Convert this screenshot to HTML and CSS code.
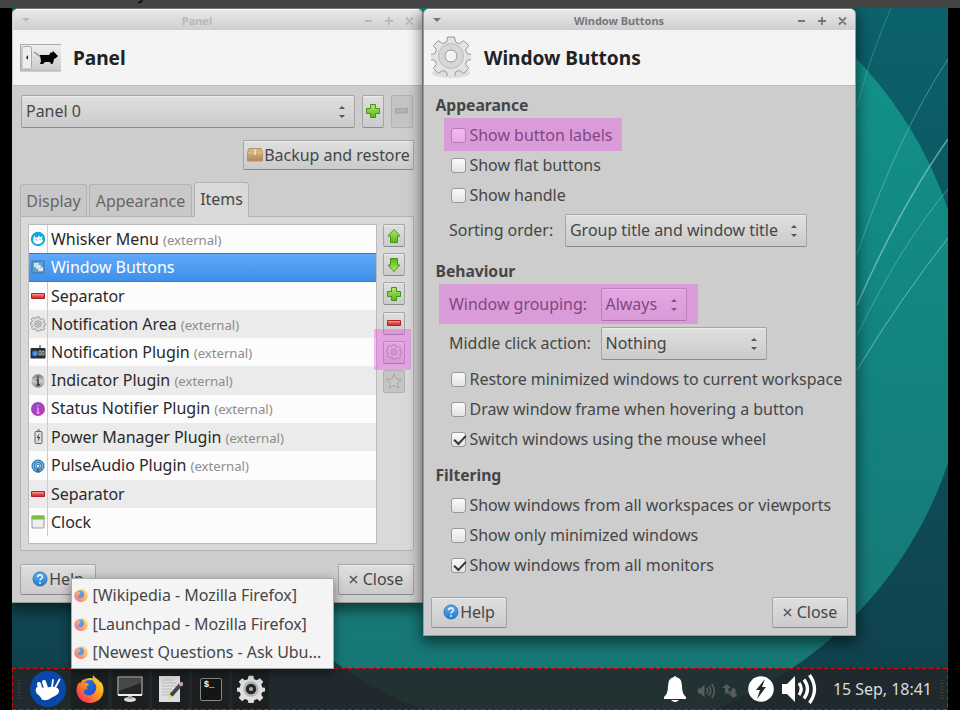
FILE: index.html
```
<!DOCTYPE html>
<html lang="en">
<head>
<meta charset="utf-8">
<title>Panel preferences</title>
<link rel="stylesheet" href="styles.css">
</head>
<body>
<svg width="0" height="0" class="defs">
  <defs>
    <linearGradient id="green" x1="0" y1="0" x2="0" y2="1"><stop offset="0" stop-color="#b4ea62"/><stop offset="1" stop-color="#58b51c"/></linearGradient>
    <linearGradient id="red" x1="0" y1="0" x2="0" y2="1"><stop offset="0" stop-color="#f08070"/><stop offset="1" stop-color="#d0202c"/></linearGradient>
    <linearGradient id="blue" x1="0" y1="0" x2="0" y2="1"><stop offset="0" stop-color="#5eb4f4"/><stop offset="1" stop-color="#2578cf"/></linearGradient>
    <linearGradient id="box" x1="0" y1="0" x2="0" y2="1"><stop offset="0" stop-color="#d9bd8c"/><stop offset="1" stop-color="#af8954"/></linearGradient>
    <linearGradient id="metal" x1="0" y1="0" x2="0" y2="1"><stop offset="0" stop-color="#f0f0f0"/><stop offset="1" stop-color="#c9c9c9"/></linearGradient>
    <linearGradient id="ball" x1="0" y1="0" x2="0" y2="1"><stop offset="0" stop-color="#777"/><stop offset=".5" stop-color="#ccc"/><stop offset="1" stop-color="#888"/></linearGradient>
    <linearGradient id="purple" x1="0" y1="0" x2="1" y2="1"><stop offset="0" stop-color="#7a4fd4"/><stop offset="1" stop-color="#d936a8"/></linearGradient>
    <linearGradient id="fire" x1="1" y1="0" x2="0" y2="1"><stop offset="0" stop-color="#fff04a"/><stop offset=".45" stop-color="#ff9a1c"/><stop offset="1" stop-color="#f5156c"/></linearGradient>
    <linearGradient id="sea" x1="0" y1="0" x2="1" y2="1"><stop offset="0" stop-color="#1e8cf0"/><stop offset=".45" stop-color="#1668d8"/><stop offset="1" stop-color="#4a35b8"/></linearGradient>
    <symbol id="plus" viewBox="0 0 16 16"><path d="M5.500 1.500h5v4h4v5h-4v4h-5v-4h-4v-5h4z" fill="url(#green)" stroke="#43941d"/></symbol>
    <symbol id="minus" viewBox="0 0 16 16"><path d="M1.500 5.500h13v5h-13z" fill="url(#red)" stroke="#b3222b"/><path d="M2.500 6.700h11" stroke="#fa9b90"/></symbol>
    <symbol id="up" viewBox="0 0 16 16"><path d="M8 1.500L14 8h-2.500v6.500h-7V8H2z" fill="url(#green)" stroke="#43941d"/></symbol>
    <symbol id="cog" viewBox="0 0 40 40"><path d="M16.500 1h7l1 5 4 1.600 4.200-3 4.900 4.900-3 4.200 1.600 4 4.800.8v5l-4.800.8-1.600 4 3 4.200-4.900 4.900-4.200-3-4 1.600-1 5h-7l-1-5-4-1.600-4.200 3-4.900-4.900 3-4.200-1.600-4-4.800-.8v-5l4.800-.8 1.600-4-3-4.200 4.900-4.900 4.200 3 4-1.600z"/></symbol>
    <symbol id="minicog" viewBox="0 0 16 16"><path d="M6.500 1h3l.5 1.800 1.200.5 1.700-.9 1.700 1.700-.9 1.700.5 1.200 1.300.5v2l-1.300.5-.5 1.200.9 1.700-1.700 1.700-1.700-.9-1.200.5L9.500 15h-3L6 13.200l-1.200-.5-1.700.9-1.700-1.700.9-1.700L1.800 9 .5 8.500v-2L1.800 6l.5-1.200-.9-1.700 1.700-1.700 1.700.9L6 1.800z" stroke-width="1"/><circle cx="8" cy="8" r="3.200" stroke-width=".9"/><circle cx="8" cy="8" r="1.400" stroke-width=".9"/></symbol>
    <symbol id="fox" viewBox="0 0 28 28"><circle cx="14" cy="15" r="12" fill="url(#fire)"/><circle cx="14" cy="13" r="8" fill="url(#sea)"/><path d="M17 0c2 3 5 4 7 7 2-1 4 6 3.500 9C27 23 21 28 14 28 6 28 .5 22 .5 15c0-3 1-6 3-8l.5 2 3-5 1 4c2-1 4 0 5 2l-2.500 1.500 1 2.500-3 .5-1 3c2 4 8 4 11 0 3-4 2-8-1-10C18 6 16 4 17 0z" fill="url(#fire)"/></symbol>
    <symbol id="help" viewBox="0 0 16 16"><circle cx="8" cy="8" r="7" fill="url(#blue)" stroke="#2b74b8"/><path d="M5.700 6.300C5.700 3.200 10.300 3.200 10.300 6 10.300 7.800 8 7.600 8 9.600" fill="none" stroke="#fff" stroke-width="1.400"/><circle cx="8" cy="12" r=".9" fill="#fff"/></symbol>
    <symbol id="sound" viewBox="0 0 36 32"><path d="M0 11h5l8-8v26l-8-8H0z" fill="currentColor"/><path d="M17 10q4.500 6 0 12M22 6.500q7 9.500 0 19M27.500 2q10 14 0 28" fill="none" stroke="currentColor" stroke-width="3.300"/></symbol>
  </defs>
</svg>

<div class="topbar"><span>y</span></div>

<main class="desktop">
  <svg class="wallpaper" viewBox="12 8 936 702" width="936" height="702">
    <defs>
      <linearGradient id="deep" x1="0" y1="0" x2="0" y2="1"><stop offset="0" stop-color="#0b626b"/><stop offset=".45" stop-color="#0d525e"/><stop offset="1" stop-color="#10404b"/></linearGradient>
      <linearGradient id="teal" x1="0" y1="0" x2="0" y2="1"><stop offset="0" stop-color="#12968d"/><stop offset=".5" stop-color="#128581"/><stop offset="1" stop-color="#197473"/></linearGradient>
    </defs>
    <rect x="12" y="8" width="936" height="702" fill="url(#deep)"/>
    <circle cx="568" cy="336.500" r="400.500" fill="url(#teal)"/>
    <g fill="none" stroke="#9edbd5">
      <path d="M857 107Q870 56 891 8" stroke-opacity=".28"/>
      <path d="M857 254Q898 135 948 59" stroke-opacity=".4"/>
      <path d="M857 305Q900 207 948 139" stroke-opacity=".6" stroke-width="1.400"/>
      <path d="M857 335Q902 243 948 189" stroke-opacity=".38"/>
      <path d="M857 370Q900 299 948 238" stroke-opacity=".6"/>
    </g>
  </svg>

  <section class="window panel-window">
    <header class="titlebar inactive">
      <svg width="8" height="5" viewBox="0 0 8 5"><path d="M0 0h8L4 4z" fill="currentColor"/></svg>
      <span>Panel</span>
      <svg class="controls" width="50" height="10" viewBox="0 0 50 10"><path d="M1 5h7M21 5h8M25 1v8M42 1.500l7 7M49 1.500l-7 7" stroke="currentColor" stroke-width="1.800"/></svg>
    </header>
    <div class="heading">
      <svg width="41" height="28" viewBox="0 0 41 28"><rect x=".5" y=".5" width="42" height="26.500" fill="url(#metal)" stroke="#aaa"/><rect x="2" y="2.500" width="9.500" height="22.500" rx="1.500" fill="#eee" stroke="#aaa"/><path d="M8 11v5l-2-2.500z" fill="#222"/><path d="M14 8l7 5" stroke="#888" stroke-width="1.300"/><path d="M20 11h9l2-3 1 1 1-2 2 2 3 3-2 2-2 1-1 4.500-2 .5-1-2h-5l-2 2h-3l1-3z" fill="#000"/></svg>
      <h1>Panel</h1>
    </div>
    <div class="panel-body">
      <div class="selector">
        <div class="combo wide"><span>Panel 0</span><i class="spin"></i></div>
        <button class="btn tool tall"><svg width="16" height="16"><use href="#plus"/></svg></button>
        <button class="btn tool tall off"><svg width="16" height="16"><path d="M1.500 5.500h12v4.500h-12z" fill="#aaa" stroke="#999"/></svg></button>
      </div>
      <button class="btn backup"><svg width="16" height="14" viewBox="0 0 16 14"><path d="M2 .5h12l1.500 4V13H.5V4.500z" fill="url(#box)" stroke="#b9935b"/><path d="M1 5h14" stroke="#e0c79c"/><path d="M8 1v6" stroke="#f4e6c8" stroke-width="1.500"/></svg><span>Backup and restore</span></button>
      <nav class="tabs"><span class="tab t1">Display</span><span class="tab t2">Appearance</span><span class="tab active">Items</span></nav>
      <div class="notebook">
        <ul class="items">
          <li><svg width="16" height="16" viewBox="0 0 16 16"><circle cx="8" cy="8" r="7.200" fill="#14a6dd"/><path d="M4 4.500l1.700 2.200 2.300-.4 1-2.300.8 2.300 2.700-1-.5 2.700 1 1.500c-.5 2.500-3 3.800-5.500 3.500C4.500 12.700 3 11 3.200 9z" fill="#fff"/><path d="M5.500 8.500l2 .8M10.500 8l-1 1" stroke="#14a6dd" stroke-width=".8"/></svg><span>Whisker Menu <small>(external)</small></span></li>
          <li class="selected"><svg width="16" height="16" viewBox="0 0 16 16"><path d="M2 2h12v12H2z" fill="#5b9ed0" stroke="#3574aa"/><path d="M4 4h5v4H4z" fill="#d8eaf7"/><path d="M6 6h5v4H6zM8 8h5v4H8z" fill="#fff" stroke="#83acd0" stroke-width=".6"/></svg><span>Window Buttons</span></li>
          <li><svg width="16" height="16"><use href="#minus"/></svg><span>Separator</span></li>
          <li><svg class="small-cog" width="16" height="16"><use href="#minicog"/></svg><span>Notification Area <small>(external)</small></span></li>
          <li><svg width="16" height="16" viewBox="0 0 16 16"><rect x=".5" y="4" width="15" height="10.500" rx="1" fill="#292d30"/><path d="M10 1v4" stroke="#222"/><circle cx="5" cy="9.500" r="3" fill="#257fe0"/><path d="M5 8v3M9 7h2v4H9zM12 7h2v4h-2z" stroke="#ddd" stroke-width=".7" fill="none"/></svg><span>Notification Plugin <small>(external)</small></span></li>
          <li><svg width="16" height="16" viewBox="0 0 16 16"><circle cx="8" cy="8" r="6.700" fill="url(#ball)"/><path d="M8 3.500v2M6.500 7H8v5M6.500 12h3.500" fill="none" stroke="#333" stroke-width="1.500"/></svg><span>Indicator Plugin <small>(external)</small></span></li>
          <li><svg width="16" height="16" viewBox="0 0 16 16"><circle cx="8" cy="8" r="7" fill="url(#purple)"/><path d="M8 4v1.500M7 7h1v5M6.500 12h3" fill="none" stroke="#ead1f4"/></svg><span>Status Notifier Plugin <small>(external)</small></span></li>
          <li><svg width="16" height="16" viewBox="0 0 16 16"><rect x="5" y="2.500" width="7" height="12" rx="1" fill="#ddd" stroke="#666"/><path d="M7 1h3" stroke="#666"/><path d="M9.500 4L6.500 9h2L7.500 13l3-5h-2z" fill="#444"/></svg><span>Power Manager Plugin <small>(external)</small></span></li>
          <li><svg width="16" height="16" viewBox="0 0 16 16"><circle cx="8" cy="8" r="6.500" fill="#2b79b5"/><g fill="none" stroke="#b9dcf3" stroke-width=".8"><circle cx="8" cy="8" r="4.800"/><circle cx="8" cy="8" r="2.700"/></g><path d="M6 14.500l2-6 2 6z" fill="#3169a6"/><circle cx="8" cy="8" r="1.200" fill="#fff"/></svg><span>PulseAudio Plugin <small>(external)</small></span></li>
          <li><svg width="16" height="16"><use href="#minus"/></svg><span>Separator</span></li>
          <li><svg width="16" height="16" viewBox="0 0 16 16"><rect x="2" y="2" width="12" height="12" rx="1" fill="#eee" stroke="#999"/><path d="M1.500 1.500h13v4h-13z" fill="#78c13e"/></svg><span>Clock</span></li>
        </ul>
        <div class="tools">
          <button class="btn tool"><svg width="16" height="16"><use href="#up"/></svg></button>
          <button class="btn tool"><svg class="flip" width="16" height="16"><use href="#up"/></svg></button>
          <button class="btn tool"><svg width="16" height="16"><use href="#plus"/></svg></button>
          <button class="btn tool"><svg width="16" height="16"><use href="#minus"/></svg></button>
          <button class="btn tool marked"><svg class="small-cog" width="16" height="16"><use href="#minicog"/></svg></button>
          <button class="btn tool off"><svg width="16" height="16" viewBox="0 0 16 16"><path d="M8 1l2 5 5.300.4-4 3.500L12.500 15 8 12.200 3.500 15l1.200-5.100-4-3.500L6 6z" fill="#ccc" stroke="#999"/></svg></button>
        </div>
      </div>
      <footer class="actions"><button class="btn"><svg width="16" height="16"><use href="#help"/></svg><span>Help</span></button><button class="btn"><svg class="x" width="9" height="9" viewBox="0 0 9 9"><path d="M1 1l7 7M8 1L1 8" stroke="#555" stroke-width="1.500"/></svg><span>Close</span></button></footer>
    </div>
  </section>

  <section class="window buttons-window">
    <header class="titlebar">
      <svg width="8" height="5" viewBox="0 0 8 5"><path d="M0 0h8L4 4z" fill="currentColor"/></svg>
      <span>Window Buttons</span>
      <svg class="controls" width="50" height="10" viewBox="0 0 50 10"><path d="M1 5h7M21 5h8M25 1v8M42 1.500l7 7M49 1.500l-7 7" stroke="currentColor" stroke-width="1.800"/></svg>
    </header>
    <div class="heading">
      <svg class="big-cog" width="42" height="44" viewBox="0 0 42 44"><ellipse cx="21" cy="37" rx="19" ry="5" fill="#ddd" stroke="none"/><use href="#cog" x="1" y="0" width="40" height="40"/><circle cx="21" cy="20" r="12.500" fill="#d6d6d6" stroke="#bbb"/><circle cx="21" cy="20" r="6" fill="#f4f4f4" stroke="#999"/></svg>
      <h1>Window Buttons</h1>
    </div>
    <div class="settings">
      <h2>Appearance</h2>
      <div class="check"><i></i><span>Show button labels</span><em class="mark mark-label"></em></div>
      <div class="check"><i></i><span>Show flat buttons</span></div>
      <div class="check"><i></i><span>Show handle</span></div>
      <div class="field"><label class="sort">Sorting order:</label><div class="combo sorting"><span>Group title and window title</span><i class="spin"></i></div></div>
      <h2 class="behaviour">Behaviour</h2>
      <div class="field"><label>Window grouping:</label><div class="combo always"><span>Always</span><i class="spin"></i></div><em class="mark mark-group"></em></div>
      <div class="field last"><label>Middle click action:</label><div class="combo nothing"><span>Nothing</span><i class="spin"></i></div></div>
      <div class="check"><i></i><span>Restore minimized windows to current workspace</span></div>
      <div class="check"><i></i><span>Draw window frame when hovering a button</span></div>
      <div class="check"><i class="on"></i><span>Switch windows using the mouse wheel</span></div>
      <h2 class="filtering">Filtering</h2>
      <div class="check"><i></i><span>Show windows from all workspaces or viewports</span></div>
      <div class="check"><i></i><span>Show only minimized windows</span></div>
      <div class="check"><i class="on"></i><span>Show windows from all monitors</span></div>
      <footer class="actions"><button class="btn"><svg width="16" height="16"><use href="#help"/></svg><span>Help</span></button><button class="btn"><svg class="x" width="9" height="9" viewBox="0 0 9 9"><path d="M1 1l7 7M8 1L1 8" stroke="#555" stroke-width="1.500"/></svg><span>Close</span></button></footer>
    </div>
  </section>

  <div class="taskbar">
    <i class="grip"></i>
    <div class="launchers">
      <span class="whisker"><svg width="38" height="38" viewBox="0 0 38 38"><circle cx="19" cy="19" r="18" fill="#0a48a8"/><path d="M7 22c-1-4 1-6 4-5 4 1 6 1 10 0 5-1 9 1 9 4 0 4-5 5-8 7-4 3-9 3-10 0-1-3-4-3-5-6z" fill="#fff"/><path d="M11 18l-1-4M17 18l-2-6" stroke="#fff" stroke-width="4" stroke-linecap="round"/><path d="M23 17l1-7M26.500 17l4-7.500" stroke="#fff" stroke-width="1.800" stroke-linecap="round"/></svg></span>
      <span><svg width="28" height="28"><use href="#fox"/></svg></span>
      <span><svg width="28" height="28" viewBox="0 0 28 28"><ellipse cx="14" cy="24.500" rx="6" ry="2.500" fill="#ddd"/><path d="M12 20h4v4h-4z" fill="#aaa"/><rect x="2" y="2" width="24" height="17.500" fill="#252525" stroke="#ccc"/><path d="M3 3h22v5L3 16z" fill="#484848"/><path d="M2 20h24" stroke="#eee" stroke-width="2"/></svg></span>
      <span><svg width="28" height="28" viewBox="0 0 28 28"><path d="M3 1h21v26H3z" fill="#ddd"/><path d="M6 5h12M6 8h15M6 11h14M6 14h10M6 17h10M6 20h7" stroke="#bbb"/><path d="M15 20.500L25 9" stroke="#444" stroke-width="4"/><path d="M11.500 24l1.500-5 4 3z" fill="#efda54"/><circle cx="25" cy="9" r="2.200" fill="#ce96be"/></svg></span>
      <span class="term"><i>$_</i></span>
      <span><svg width="28" height="28" viewBox="0 0 40 40" fill="#dedede"><use href="#cog" width="40" height="40"/><circle cx="20" cy="20" r="11" fill="#b4b4b4"/><circle cx="20" cy="20" r="7.500" fill="#252829"/><circle cx="20" cy="20" r="3" fill="#aaa"/></svg></span>
    </div>
    <div class="tray">
      <svg width="24" height="28" viewBox="0 0 24 28"><path d="M11 2q0-1 1-1t1 1q6 1 6 9 0 8 4 11v2H1v-2q4-3 4-11 0-8 6-9z" fill="#fff"/><path d="M8 25h8q-4 4-8 0z" fill="#fff"/></svg>
      <svg class="quiet" width="18" height="16"><use href="#sound"/></svg>
      <svg class="quiet arrows" width="18" height="16" viewBox="0 0 18 16"><path d="M1 5l4.500-4L10 5H7.500v3.500H11v2H4V5zM10.500 5.500h4V11H17l-4.500 4L8 11h2.500z" fill="currentColor"/></svg>
      <svg class="power" width="26" height="26" viewBox="0 0 26 26"><circle cx="13" cy="13" r="12.800" fill="#fff"/><path d="M17 3L8 14h4l-3 9 9-12h-4z" fill="#222b2d"/></svg>
      <svg class="volume" width="36" height="32"><use href="#sound"/></svg>
      <time>15 Sep, 18:41</time>
      <i class="grip"></i>
    </div>
  </div>

  <div class="popup">
    <div><svg width="14" height="14"><use href="#fox"/></svg><span>[Wikipedia - Mozilla Firefox]</span></div>
    <div><svg width="14" height="14"><use href="#fox"/></svg><span>[Launchpad - Mozilla Firefox]</span></div>
    <div><svg width="14" height="14"><use href="#fox"/></svg><span>[Newest Questions - Ask Ubu...</span></div>
  </div>
</main>
</body>
</html>
```
FILE: styles.css
```
* { box-sizing: border-box; }
body { margin: 0; width: 960px; height: 710px; overflow: hidden; background: #000; font: 16px/22px "Noto Sans", sans-serif; letter-spacing: -.03px; color: #464646; }
h1, h2, ul { margin: 0; padding: 0; }
svg { flex: none; display: block; }
.defs { position: absolute; }
.topbar { height: 8px; background: #444; overflow: hidden; padding-left: 138px; }
.topbar span { display: block; margin-top: -18px; color: #000; }
.desktop { position: relative; width: 936px; height: 702px; margin-left: 12px; overflow: hidden; }
.wallpaper { position: absolute; inset: 0; }

.window { position: absolute; top: 0; display: flex; flex-direction: column; background: #cdcdcd; border: 1px solid #999; border-top-color: #777; border-radius: 6px 6px 0 0; box-shadow: 0 5px 14px 2px rgba(0, 0, 0, .5); overflow: hidden; }
.panel-window { left: 0; width: 411px; height: 595px; border-left-color: #ccc; }
.buttons-window { left: 411px; width: 433px; height: 628px; }
.titlebar { height: 21px; display: flex; align-items: center; padding: 1px 8px 0 9px; background: linear-gradient(#e9e9e9, #cecece); border-top: 1px solid #fff; color: #777; font-size: 11px; font-weight: 700; }
.titlebar span { flex: 1; text-align: center; }
.titlebar.inactive { color: #b9b9b9; }
.heading { height: 56px; display: flex; align-items: center; gap: 12px; padding: 0 7px; background: #f4f4f4; border-bottom: 1px solid #bbb; }
.heading h1 { font-size: 19.100px; line-height: 28px; color: #222; }
.big-cog { fill: #e3e3e3; stroke: #999; margin-left: -1px; }
.small-cog { fill: #ddd; stroke: #999; }

.btn, .combo { font: inherit; letter-spacing: inherit; color: inherit; border: 1px solid #a5a5a5; border-bottom-color: #8b8b8b; border-radius: 2px; background: linear-gradient(#dfdfdf, #cbcbcb); box-shadow: inset 0 1px #ececec; }
.btn { display: flex; align-items: center; justify-content: center; gap: 1px; padding: 0; }
.combo { height: 33px; display: flex; align-items: center; justify-content: space-between; padding: 0 9px 2px 4px; white-space: nowrap; }
.spin { display: flex; flex-direction: column; justify-content: space-between; width: 6px; height: 12px; margin-top: 3px; }
.spin::before, .spin::after { content: ""; border: 3px solid transparent; }
.spin::before { border-top: 0; border-bottom-color: #555; }
.spin::after { border-bottom: 0; border-top-color: #555; }
.tool { width: 22px; height: 23px; }
.tool.tall { height: 33px; }
.tool.tall svg { margin-bottom: 2px; }
.off { background: #c4c4c4; border-color: #b0b0b0; box-shadow: none; }
.off svg { opacity: .7; }
.flip { transform: scaleY(-1); }

.panel-body { flex: 1; display: flex; flex-direction: column; padding: 9px 8px 6px 8px; }
.selector { display: flex; gap: 7px; }
.combo.wide { width: 334px; }
.backup { width: 171px; height: 30px; align-self: flex-end; margin: 12px 0 0; padding-bottom: 1px; }
.tabs { display: flex; align-items: flex-end; gap: 2px; height: 34px; margin-top: 12px; margin-left: -1px; }
.tab { height: 32px; padding-top: 5px; text-align: center; border: 1px solid #b3b3b3; border-bottom: 0; border-radius: 3px 3px 0 0; background: #c8c8c8; color: #666; }
.t1 { width: 67px; }
.t2 { width: 103px; }
.tab.active { width: 55px; height: 35px; margin-bottom: -1px; position: relative; background: #d9d9d9; color: #464646; }
.notebook { height: 335px; width: 394px; margin-left: -1px; display: flex; gap: 6px; padding: 7px; border: 1px solid #b3b3b3; background: #d9d9d9; border-radius: 0 0 2px 2px; }
.items { width: 349px; height: 320px; list-style: none; background: #fcfcfc; border: 1px solid #bbb; color: #292929; }
.items li { height: 28.300px; display: flex; align-items: center; gap: 5px; padding-left: 1px; white-space: nowrap; background: linear-gradient(#ccc, #ccc) 18px 0 / 1px 100% no-repeat; }
.items li:nth-child(even) { background-color: #ebebeb; }
.items li.selected { background: linear-gradient(#60a9fb, #3f90ea); color: #fff; border: solid #2e80d6; border-width: 1px 0; }
.items small { font-size: 13.200px; color: #8c8c8c; }
.tools { display: flex; flex-direction: column; gap: 6.200px; }
.marked { position: relative; }
.marked::after, .mark { content: ""; position: absolute; background: rgba(238, 69, 238, .36); }
.marked::after { left: -10px; top: -13px; width: 37px; height: 41px; }
.actions { display: flex; justify-content: space-between; }
.actions .btn { width: 76px; height: 31px; padding-bottom: 1px; }
.panel-body .actions { margin: 13px 0 0 -1px; }
.x { margin-right: 4px; }

.settings { flex: 1; padding: 8px 7px 0 11.500px; }
h2 { font-size: 15.700px; line-height: 22px; height: 26px; }
.check { position: relative; height: 30px; display: flex; align-items: center; gap: 4px; padding-left: 15px; white-space: nowrap; }
.check span { margin-top: -1px; }
.check i { width: 15px; height: 15px; border: 1px solid #999; border-radius: 3px; background: linear-gradient(#fafafa, #e3e3e3); }
.check i.on::after { content: ""; display: block; width: 10px; height: 5px; margin: 2px 0 0 2px; border: solid #333; border-width: 0 0 2.500px 2.500px; transform: rotate(-47deg); }
.field { position: relative; display: flex; align-items: center; height: 33px; padding-left: 13.500px; margin: 4px 0 6px; white-space: nowrap; }
.field label { width: 151.500px; padding-bottom: 1px; }
.field label.sort { width: 116px; }
.field.last { margin-bottom: 4px; }
.sorting { width: 242px; }
.always { width: 86px; }
.nothing { width: 166px; }
.behaviour { margin-top: 13px; height: 24px; }
.filtering { margin-top: 10px; }
.mark-label { left: 8px; top: -2px; width: 178px; height: 33px; }
.mark-group { left: 3px; top: -4px; width: 259px; height: 40px; }
.settings .actions { margin: 17px 0 0 -4.500px; }

.popup { position: absolute; left: 58.500px; top: 570px; width: 263px; height: 91px; padding: 2px 0 0 2px; border: 1px solid #aaa; background: #f4f4f4; box-shadow: 0 3px 10px rgba(0, 0, 0, .45); }
.popup div { height: 28.400px; display: flex; align-items: center; gap: 5px; white-space: nowrap; letter-spacing: -.04px; }
.popup svg { opacity: .65; }

.taskbar { position: absolute; left: 0; top: 660px; width: 936px; height: 42px; display: flex; align-items: center; justify-content: space-between; padding: 0 4px 0 5px; background: repeating-linear-gradient(90deg, #e80909 0 4px, transparent 4px 7px) top / 100% 1px no-repeat, repeating-linear-gradient(90deg, #e80909 0 4px, transparent 4px 7px) bottom / 100% 1px no-repeat, repeating-linear-gradient(#e80909 0 4px, transparent 4px 7px) left / 1px 100% no-repeat, repeating-linear-gradient(#e80909 0 4px, transparent 4px 7px) right / 1px 100% no-repeat, rgba(36, 36, 38, .83); }
.grip { width: 4px; height: 20px; background: radial-gradient(circle, #333b3d 0 .6px, transparent 1px) 0 0 / 2px 3px; }
.launchers { display: flex; gap: 3.300px; margin-left: 7px; flex: 1; }
.launchers > span { width: 37px; height: 39px; display: flex; align-items: center; justify-content: center; background: #1c2021; }
.launchers .whisker { width: 40px; background: none; }
.launchers .whisker svg { margin-left: -1px; }
.term i { width: 22px; height: 23px; padding-left: 3px; border: 1px solid #888; border-radius: 2px; background: #151515; color: #fff; font: bold 9px/13px "Liberation Mono", monospace; letter-spacing: 0; }
.tray { display: flex; align-items: center; }
.quiet { color: #575c5c; margin-left: 11px; margin-top: 3px; }
.quiet.arrows { margin-left: 5px; }
.power { margin-left: 9px; }
.volume { margin-left: 8px; color: #fff; }
.tray time { color: #dcdcdc; margin: 0 8px 0 15px; white-space: nowrap; }
```
